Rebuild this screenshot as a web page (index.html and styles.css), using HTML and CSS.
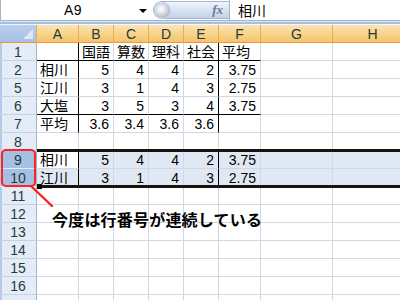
FILE: index.html
```html
<!DOCTYPE html>
<html lang="ja">

<head>
    <meta charset="UTF-8">
    <title>行番号の選択</title>
    <link rel="stylesheet" href="styles.css">
</head>

<body>
    <div class="window">
        <!-- formula bar -->
        <div class="formula-bar">
            <div class="name-box">
                <span class="name">A9</span>
                <span class="arrow"></span>
            </div>
            <div class="fx-pill">
                <span class="knob"></span>
                <span class="fx">fx</span>
            </div>
            <div class="formula-input">相川</div>
        </div>
        <div class="bar-rule"></div>

        <!-- sheet grid -->
        <div class="sheet">
            <div class="corner"><span class="tri"></span></div>
            <div class="col-head">A</div>
            <div class="col-head">B</div>
            <div class="col-head">C</div>
            <div class="col-head">D</div>
            <div class="col-head">E</div>
            <div class="col-head">F</div>
            <div class="col-head">G</div>
            <div class="col-head">H</div>

            <div class="row-head">1</div>
            <div class="cell head-line sep"></div>
            <div class="cell head-line">国語</div>
            <div class="cell head-line">算数</div>
            <div class="cell head-line">理科</div>
            <div class="cell head-line sep">社会</div>
            <div class="cell head-line">平均</div>
            <div class="cell"></div>
            <div class="cell"></div>

            <div class="row-head">2</div>
            <div class="cell sep">相川</div>
            <div class="cell num">5</div>
            <div class="cell num">4</div>
            <div class="cell num">4</div>
            <div class="cell num sep">2</div>
            <div class="cell num">3.75</div>
            <div class="cell"></div>
            <div class="cell"></div>

            <div class="row-head">5</div>
            <div class="cell sep">江川</div>
            <div class="cell num">3</div>
            <div class="cell num">1</div>
            <div class="cell num">4</div>
            <div class="cell num sep">3</div>
            <div class="cell num">2.75</div>
            <div class="cell"></div>
            <div class="cell"></div>

            <div class="row-head">6</div>
            <div class="cell sep head-line">大塩</div>
            <div class="cell num head-line">3</div>
            <div class="cell num head-line">5</div>
            <div class="cell num head-line">3</div>
            <div class="cell num sep head-line">4</div>
            <div class="cell num head-line">3.75</div>
            <div class="cell"></div>
            <div class="cell"></div>

            <div class="row-head">7</div>
            <div class="cell sep">平均</div>
            <div class="cell num">3.6</div>
            <div class="cell num">3.4</div>
            <div class="cell num">3.6</div>
            <div class="cell num sep">3.6</div>
            <div class="cell num"></div>
            <div class="cell"></div>
            <div class="cell"></div>

            <div class="row-head">8</div>
            <div class="cell"></div>
            <div class="cell"></div>
            <div class="cell"></div>
            <div class="cell"></div>
            <div class="cell"></div>
            <div class="cell"></div>
            <div class="cell"></div>
            <div class="cell"></div>

            <div class="row-head picked">9</div>
            <div class="cell active sep">相川</div>
            <div class="cell sel num">5</div>
            <div class="cell sel num">4</div>
            <div class="cell sel num">4</div>
            <div class="cell sel num sep">2</div>
            <div class="cell sel num">3.75</div>
            <div class="cell sel"></div>
            <div class="cell sel"></div>

            <div class="row-head picked">10</div>
            <div class="cell sel sep">江川</div>
            <div class="cell sel num">3</div>
            <div class="cell sel num">1</div>
            <div class="cell sel num">4</div>
            <div class="cell sel num sep">3</div>
            <div class="cell sel num">2.75</div>
            <div class="cell sel"></div>
            <div class="cell sel"></div>

            <div class="row-head">11</div>
            <div class="cell"></div><div class="cell"></div><div class="cell"></div><div class="cell"></div>
            <div class="cell"></div><div class="cell"></div><div class="cell"></div><div class="cell"></div>

            <div class="row-head">12</div>
            <div class="cell"></div><div class="cell"></div><div class="cell"></div><div class="cell"></div>
            <div class="cell"></div><div class="cell"></div><div class="cell"></div><div class="cell"></div>

            <div class="row-head">13</div>
            <div class="cell"></div><div class="cell"></div><div class="cell"></div><div class="cell"></div>
            <div class="cell"></div><div class="cell"></div><div class="cell"></div><div class="cell"></div>

            <div class="row-head">14</div>
            <div class="cell"></div><div class="cell"></div><div class="cell"></div><div class="cell"></div>
            <div class="cell"></div><div class="cell"></div><div class="cell"></div><div class="cell"></div>

            <div class="row-head">15</div>
            <div class="cell"></div><div class="cell"></div><div class="cell"></div><div class="cell"></div>
            <div class="cell"></div><div class="cell"></div><div class="cell"></div><div class="cell"></div>

            <div class="row-head">16</div>
            <div class="cell"></div><div class="cell"></div><div class="cell"></div><div class="cell"></div>
            <div class="cell"></div><div class="cell"></div><div class="cell"></div><div class="cell"></div>

            <div class="row-head"></div>
            <div class="cell"></div><div class="cell"></div><div class="cell"></div><div class="cell"></div>
            <div class="cell"></div><div class="cell"></div><div class="cell"></div><div class="cell"></div>

            <!-- selection outline and callout lie over the grid -->
            <div class="selection"></div>
            <div class="fill-handle"></div>
            <div class="ring"></div>
            <svg class="pointer" width="30" height="30" viewBox="0 0 30 30">
                <line x1="1" y1="1" x2="22" y2="21" stroke="#ff1e1e" stroke-width="2.4" stroke-linecap="round" />
            </svg>
            <div class="note">今度は行番号が連続している</div>
        </div>
    </div>
</body>

</html>
```

FILE: styles.css
```css
/* whole window */
body {
    margin: 0;
    background: #ffffff;
    font-family: "Liberation Sans", "Noto Sans CJK JP", sans-serif;
    color: #000;
}

.window {
    width: 400px;
    height: 300px;
    overflow: hidden;
}

/* formula bar on top */
.formula-bar {
    display: flex;
    height: 21px;
    border-bottom: 1px solid #a7b3c4;
    box-sizing: border-box;
    background: #ffffff;
}

.name-box {
    width: 152px;
    display: flex;
    align-items: center;
    border-left: 1px solid #a9b3c2;
    box-sizing: border-box;
    position: relative;
}

.name {
    flex: 1;
    text-align: center;
    font-size: 14px;
    padding-left: 6px;
    letter-spacing: 0.5px;
}

.arrow {
    width: 0;
    height: 0;
    border-left: 4px solid transparent;
    border-right: 4px solid transparent;
    border-top: 4px solid #000;
    margin-right: 5px;
    margin-top: 1px;
}

.fx-pill {
    width: 76px;
    margin: 1px 0 1px 1px;
    border-radius: 10px 0 0 10px;
    background: linear-gradient(#f1f5fb, #d6e1f1 55%, #c3d3ea);
    border: 1px solid #9fb6d8;
    border-right: none;
    display: flex;
    align-items: center;
    justify-content: space-between;
    box-sizing: border-box;
}

.knob {
    width: 15px;
    height: 15px;
    border-radius: 50%;
    margin-left: 1px;
    background: radial-gradient(circle at 40% 40%, #ffffff 0, #e3e7ee 30%, #a9b2c0 80%);
    box-shadow: 0 0 0 1px #c7d3e6;
}

.fx {
    font-family: "Liberation Serif", serif;
    font-style: italic;
    font-weight: bold;
    font-size: 13px;
    color: #6d7a8c;
    margin-right: 6px;
}

.formula-input {
    flex: 1;
    border-left: 1px solid #a9b3c2;
    font-family: "Noto Sans CJK JP", sans-serif;
    font-size: 14px;
    padding-left: 8px;
    line-height: 20px;
}

.bar-rule {
    height: 2px;
    border-top: 1px solid #dce5f2;
    border-bottom: 1px solid #f3f6fb;
    background: #a6bfe3;
}

/* grid of cells */
.sheet {
    position: relative;
    display: grid;
    grid-template-columns: 37px 42px 35px 35px 35px 35px 42px 72px 80px;
    grid-template-rows: 18px;
    grid-auto-rows: 18px;
}

.corner {
    background: linear-gradient(#b9cfee, #a6c0e6);
    border-right: 1px solid #f4a64a;
    border-bottom: 1px solid #f29436;
    box-sizing: border-box;
    position: relative;
}

.tri {
    position: absolute;
    right: 3px;
    bottom: 3px;
    width: 0;
    height: 0;
    border-left: 10px solid transparent;
    border-bottom: 10px solid #dfe7f3;
}

.col-head {
    background: linear-gradient(#fbe4b4, #f8d48d 50%, #f3c46b);
    border-right: 1px solid #f4a64a;
    border-bottom: 1px solid #f29436;
    box-sizing: border-box;
    text-align: center;
    font-size: 14px;
    line-height: 19px;
    color: #243b3a;
}

.row-head {
    background: #e4ecf7;
    border-right: 1px solid #9eb6ce;
    border-bottom: 1px solid #c5d3e6;
    box-shadow: inset 2px 0 #b5cae8;
    box-sizing: border-box;
    text-align: center;
    font-size: 14px;
    line-height: 19px;
    color: #243b3a;
}

.row-head.picked {
    background: #a6c0e5;
    border-bottom-color: #e4ecf7;
}

.cell {
    border-right: 1px solid #d0d7e5;
    border-bottom: 1px solid #d0d7e5;
    box-sizing: border-box;
    font-size: 14px;
    line-height: 19px;
    padding: 0 2px 0 3px;
    white-space: nowrap;
    overflow: hidden;
}

.num {
    text-align: right;
    padding-right: 4px;
}

.sep {
    border-right-color: #000;
}

.head-line {
    border-bottom-color: #000;
}

.sel {
    background: #e0e8f4;
}

.active {
    background: #ffffff;
}

/* overlays */
.selection {
    position: absolute;
    left: 37px;
    top: 124px;
    width: 363px;
    height: 39px;
    border-top: 3px solid #17140e;
    border-bottom: 3px solid #17140e;
    box-sizing: border-box;
}

.fill-handle {
    position: absolute;
    left: 37px;
    top: 159px;
    width: 5px;
    height: 5px;
    background: #000;
}

.ring {
    position: absolute;
    left: 1px;
    top: 124px;
    width: 35px;
    height: 38px;
    border: 2px solid #ff2323;
    border-radius: 5px;
    box-sizing: border-box;
}

.pointer {
    position: absolute;
    left: 30px;
    top: 160px;
}

.note {
    position: absolute;
    left: 52px;
    top: 184px;
    font-family: "Noto Sans CJK JP", sans-serif;
    font-weight: bold;
    font-size: 16px;
    line-height: 20px;
    letter-spacing: 0.2px;
}
```
